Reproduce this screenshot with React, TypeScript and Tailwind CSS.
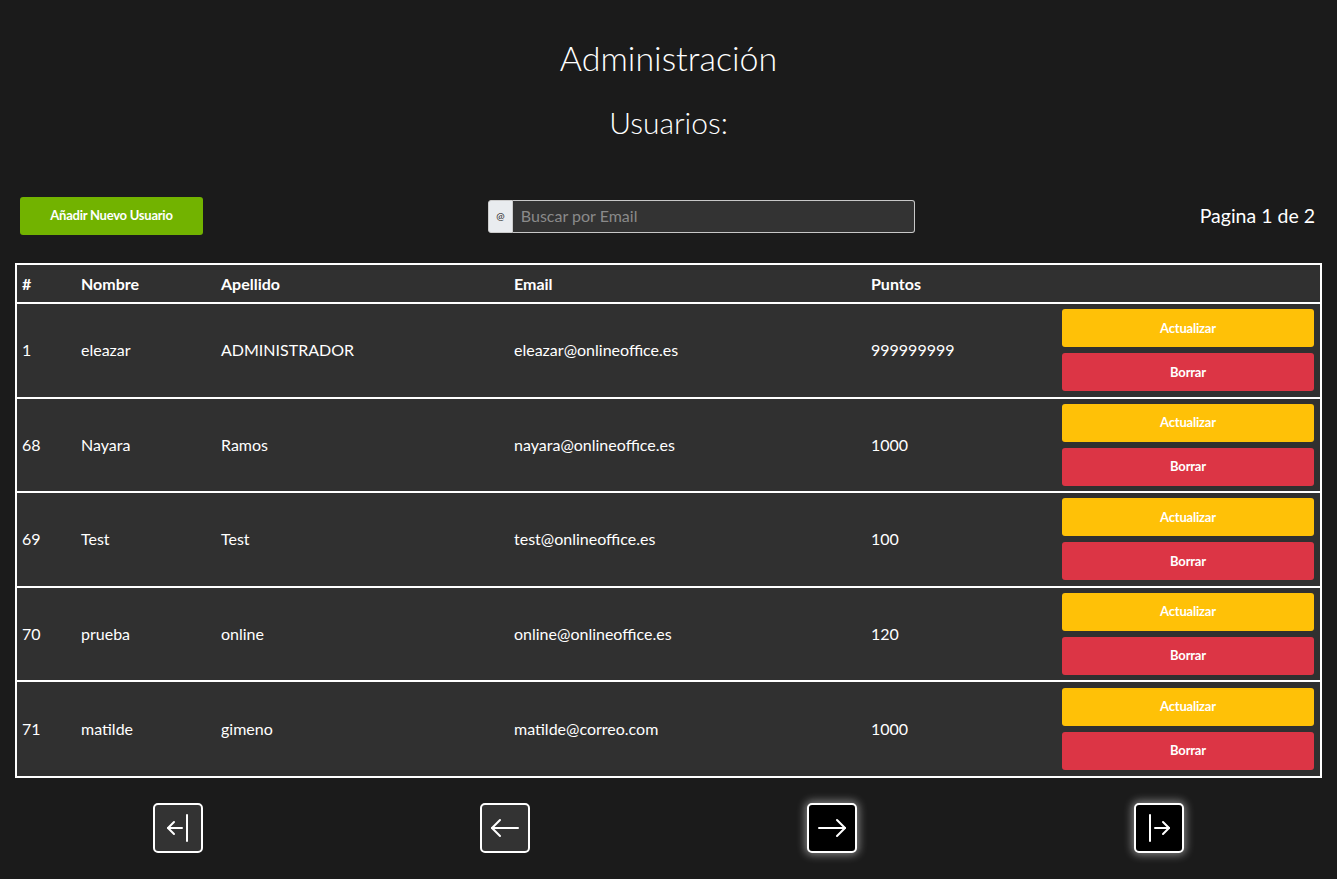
import React from 'react';

type Usuario = { id: number; nombre: string; apellido: string; email: string; puntos: number };

const usuarios: Usuario[] = [
  { id: 1, nombre: 'eleazar', apellido: 'ADMINISTRADOR', email: 'eleazar@onlineoffice.es', puntos: 999999999 },
  { id: 68, nombre: 'Nayara', apellido: 'Ramos', email: 'nayara@onlineoffice.es', puntos: 1000 },
  { id: 69, nombre: 'Test', apellido: 'Test', email: 'test@onlineoffice.es', puntos: 100 },
  { id: 70, nombre: 'prueba', apellido: 'online', email: 'online@onlineoffice.es', puntos: 120 },
  { id: 71, nombre: 'matilde', apellido: 'gimeno', email: 'matilde@correo.com', puntos: 1000 },
];

// bootstrap-style arrows, stroked
const FirstIcon = () => (
  <svg width="32" height="32" viewBox="0 0 16 16" fill="none" stroke="white" strokeWidth="1" strokeLinecap="round" strokeLinejoin="round">
    <path d="M12.5 1.5v13" />
    <path d="M10 8H3" />
    <path d="M6 5 3 8l3 3" />
  </svg>
);

const PrevIcon = () => (
  <svg width="32" height="32" viewBox="0 0 16 16" fill="none" stroke="white" strokeWidth="1" strokeLinecap="round" strokeLinejoin="round">
    <path d="M14.5 8H1.5" />
    <path d="M5.5 4 1.5 8l4 4" />
  </svg>
);

const NextIcon = () => (
  <svg width="32" height="32" viewBox="0 0 16 16" fill="none" stroke="white" strokeWidth="1" strokeLinecap="round" strokeLinejoin="round">
    <path d="M1.5 8h13" />
    <path d="m10.5 4 4 4-4 4" />
  </svg>
);

const LastIcon = () => (
  <svg width="32" height="32" viewBox="0 0 16 16" fill="none" stroke="white" strokeWidth="1" strokeLinecap="round" strokeLinejoin="round">
    <path d="M3.5 1.5v13" />
    <path d="M6 8h7" />
    <path d="m10 5 3 3-3 3" />
  </svg>
);

const PageButton = ({ children, active }: { children: React.ReactNode; active?: boolean }) => (
  <button
    className={`w-[50px] h-[50px] flex items-center justify-center rounded-[5px] border-2 border-white ${
      active ? 'bg-black shadow-[0_0_8px_2px_rgba(255,255,255,0.45)]' : 'bg-[#333333]'
    }`}
  >
    {children}
  </button>
);

export default function App() {
  return (
    <div className="min-h-screen bg-[#1b1b1b] text-white font-['Lato',sans-serif] pt-[36px] pb-[26px]">
      <h1 className="text-center text-[34px] leading-[44px] font-light">Administración</h1>
      <h2 className="text-center text-[30px] leading-[36px] font-light mt-[24px]">Usuarios:</h2>

      <div className="flex items-center justify-between pl-5 pr-[22px] mt-[57px]">
        <button className="w-[183px] h-[38px] rounded-[3px] bg-[#72b300] text-[13px] font-bold tracking-[-0.25px]">
          Añadir Nuevo Usuario
        </button>
        <div className="flex w-[427px] h-[33px]">
          <span className="w-[25px] flex items-center justify-center bg-[#e9ecef] text-[#222] text-[10px] rounded-l-[3px] border border-[#ccc]">
            @
          </span>
          <input
            className="flex-1 bg-[#333333] border border-[#c8c8c8] border-l-0 rounded-r-[3px] px-2 text-[16px] text-white placeholder:text-[#8a8a8a] outline-none"
            placeholder="Buscar por Email"
          />
        </div>
        <span className="text-[19.5px]">Pagina 1 de 2</span>
      </div>

      <div className="mx-[15px] mt-[28px] border-2 border-white bg-[#303030]">
        <table className="w-full table-fixed border-collapse text-[16px]">
          <colgroup>
            <col className="w-[58px]" />
            <col className="w-[140px]" />
            <col className="w-[293px]" />
            <col className="w-[357px]" />
            <col className="w-[191px]" />
            <col />
          </colgroup>
          <thead>
            <tr className="h-[38px] font-bold text-left">
              <th className="pl-[5px]">#</th>
              <th className="pl-[6px]">Nombre</th>
              <th className="pl-[6px]">Apellido</th>
              <th className="pl-[6px]">Email</th>
              <th className="pl-[6px]">Puntos</th>
              <th />
            </tr>
          </thead>
          <tbody>
            {usuarios.map((u) => (
              <tr key={u.id} className="border-t-2 border-white h-[94.6px]">
                <td className="pl-[5px]">{u.id}</td>
                <td className="pl-[6px]">{u.nombre}</td>
                <td className="pl-[6px]">{u.apellido}</td>
                <td className="pl-[6px]">{u.email}</td>
                <td className="pl-[6px]">{u.puntos}</td>
                <td className="px-[6px]">
                  <div className="flex flex-col gap-[6px]">
                    <button className="h-[38px] rounded-[3px] bg-[#ffc107] text-[13px] font-bold tracking-[-0.2px]">
                      Actualizar
                    </button>
                    <button className="h-[38px] rounded-[3px] bg-[#dc3545] text-[13px] font-bold tracking-[-0.2px]">
                      Borrar
                    </button>
                  </div>
                </td>
              </tr>
            ))}
          </tbody>
        </table>
      </div>

      <div className="mx-[15px] mt-[25px] grid grid-cols-4 justify-items-center">
        <PageButton><FirstIcon /></PageButton>
        <PageButton><PrevIcon /></PageButton>
        <PageButton active><NextIcon /></PageButton>
        <PageButton active><LastIcon /></PageButton>
      </div>
    </div>
  );
}
